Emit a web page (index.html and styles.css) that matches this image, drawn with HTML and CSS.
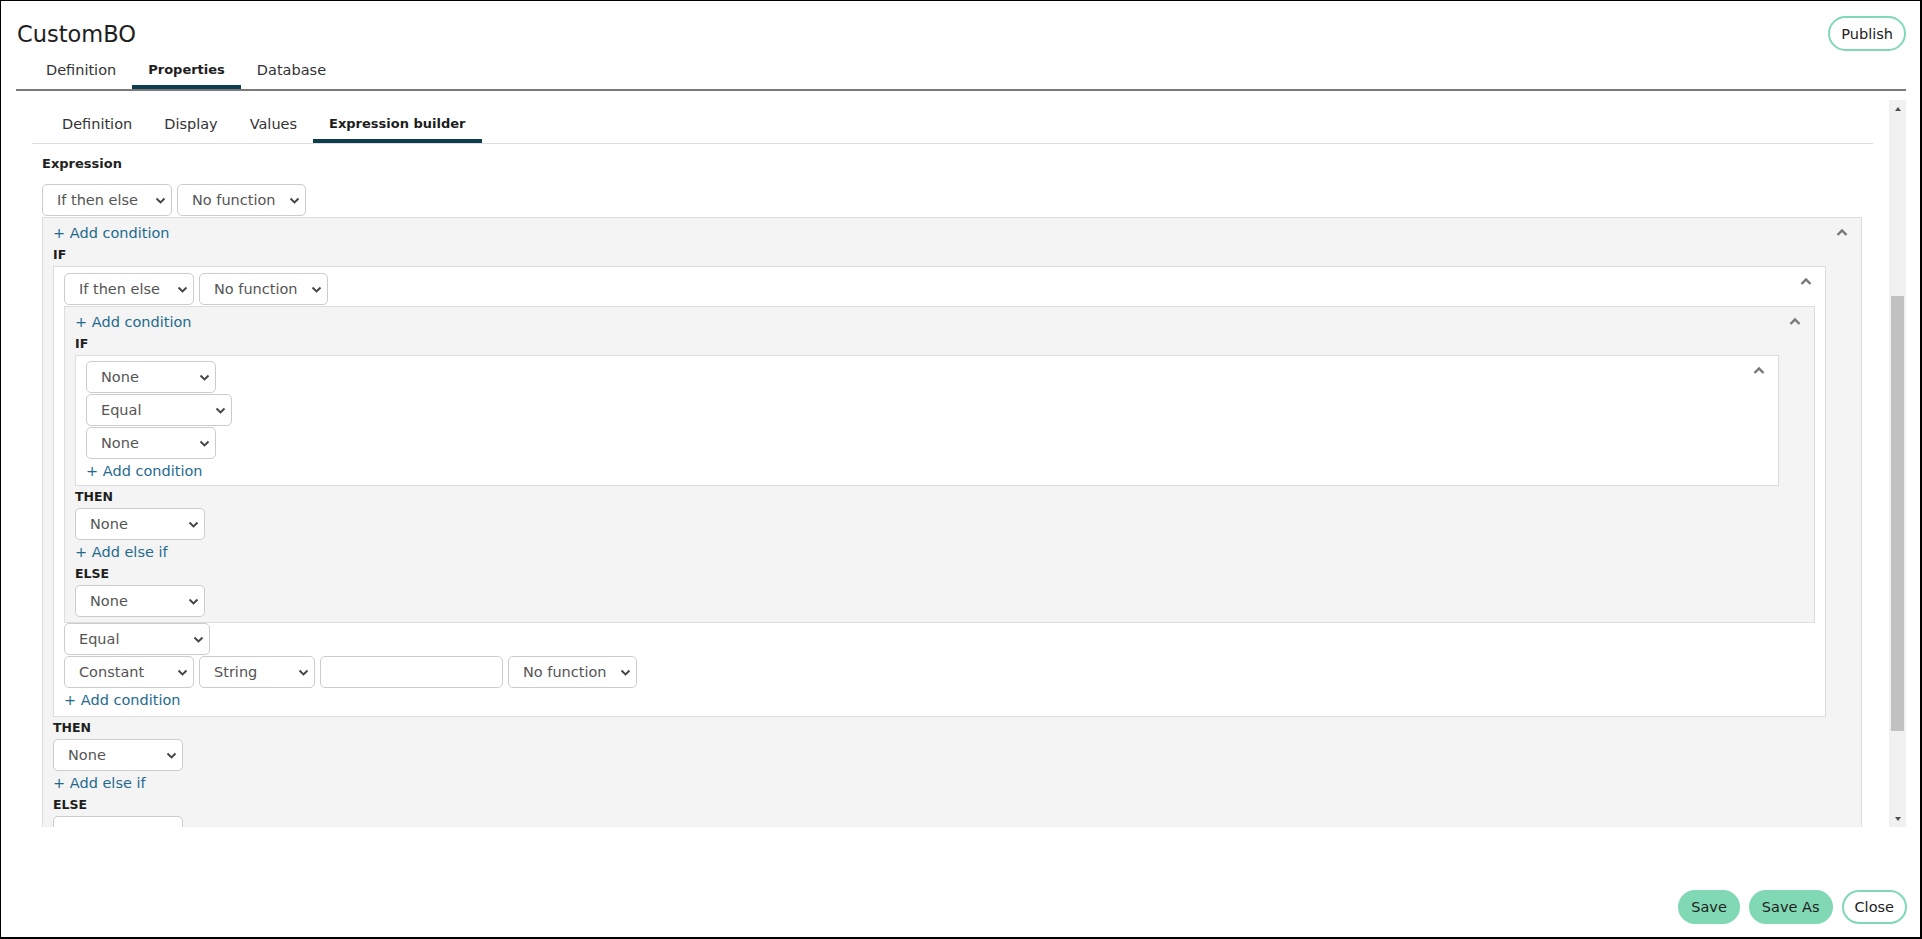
FILE: index.html
```html
<!DOCTYPE html>
<html>
  <head>
    <meta charset="utf-8">
    <title>CustomBO</title>
    <link rel="stylesheet" href="styles.css">
  </head>
  <body>
    <div class="app">
      <header class="topbar">
        <h1>CustomBO</h1>
        <button type="button" class="pill">Publish</button>
      </header>
      <nav class="tabs main-tabs">
        <span class="tab">Definition</span>
        <span class="tab active">Properties</span>
        <span class="tab">Database</span>
      </nav>

      <div class="panel">
        <div class="panel-body">
          <nav class="tabs sub-tabs">
            <span class="tab">Definition</span>
            <span class="tab">Display</span>
            <span class="tab">Values</span>
            <span class="tab active">Expression builder</span>
          </nav>

          <section class="expr">
            <h3 class="expr-title">Expression</h3>
            <div class="row">
              <select class="sel w130"><option>If then else</option></select>
              <select class="sel w129"><option>No function</option></select>
            </div>

            <!-- root if / then / else -->
            <div class="ite">
              <span class="toggle"><svg width="12" height="8" viewBox="0 0 12 8"><polyline points="1.5,7 6,2.5 10.5,7" fill="none" stroke="#777" stroke-width="2.4"/></svg></span>
              <a class="add" href="#">+ Add condition</a>
              <div class="kw">IF</div>

              <div class="cond">
                <span class="toggle"><svg width="12" height="8" viewBox="0 0 12 8"><polyline points="1.5,7 6,2.5 10.5,7" fill="none" stroke="#777" stroke-width="2.4"/></svg></span>
                <div class="row">
                  <select class="sel w130"><option>If then else</option></select>
                  <select class="sel w129"><option>No function</option></select>
                </div>

                <!-- nested if / then / else -->
                <div class="ite inner">
                  <span class="toggle"><svg width="12" height="8" viewBox="0 0 12 8"><polyline points="1.5,7 6,2.5 10.5,7" fill="none" stroke="#777" stroke-width="2.4"/></svg></span>
                  <a class="add" href="#">+ Add condition</a>
                  <div class="kw">IF</div>
                  <div class="cond leaf">
                    <span class="toggle"><svg width="12" height="8" viewBox="0 0 12 8"><polyline points="1.5,7 6,2.5 10.5,7" fill="none" stroke="#777" stroke-width="2.4"/></svg></span>
                    <select class="sel w130"><option>None</option></select>
                    <select class="sel w146"><option>Equal</option></select>
                    <select class="sel w130"><option>None</option></select>
                    <a class="add" href="#">+ Add condition</a>
                  </div>
                  <div class="kw">THEN</div>
                  <select class="sel w130"><option>None</option></select>
                  <a class="add" href="#">+ Add else if</a>
                  <div class="kw">ELSE</div>
                  <select class="sel w130"><option>None</option></select>
                </div>

                <select class="sel w146"><option>Equal</option></select>
                <div class="row">
                  <select class="sel w130"><option>Constant</option></select>
                  <select class="sel w116"><option>String</option></select>
                  <input class="field" type="text">
                  <select class="sel w129"><option>No function</option></select>
                </div>
                <a class="add" href="#">+ Add condition</a>
              </div>

              <div class="kw">THEN</div>
              <select class="sel w130"><option>None</option></select>
              <a class="add" href="#">+ Add else if</a>
              <div class="kw">ELSE</div>
              <select class="sel w130"><option>None</option></select>
            </div>
          </section>
        </div>

        <div class="scrollbar">
          <span class="sb-btn up"></span>
          <div class="sb-track"><div class="sb-thumb"></div></div>
          <span class="sb-btn down"></span>
        </div>
      </div>

      <footer class="actions">
        <button type="button" class="pill solid">Save</button>
        <button type="button" class="pill solid">Save As</button>
        <button type="button" class="pill">Close</button>
      </footer>
    </div>
  </body>
</html>
```

FILE: styles.css
```css
* {
  box-sizing: border-box;
}
html, body {
  margin: 0;
  padding: 0;
}
body {
  font-family: "DejaVu Sans", sans-serif;
  font-size: 14.5px;
  color: #222;
  background: #fff;
}
.app {
  height: 939px;
  border-style: solid;
  border-color: #000;
  border-width: 1px 2px 2px 1px;
  padding: 15px 14px 0 15px;
  display: flex;
  flex-direction: column;
}

/* header */
.topbar {
  display: flex;
  align-items: center;
  justify-content: space-between;
  height: 35px;
  padding-left: 1px;
}
.topbar h1 {
  margin: 0;
  font-size: 22.5px;
  font-weight: normal;
  color: #1e1e1e;
}
.pill {
  height: 35px;
  padding: 0 11px;
  border: 2px solid #81d8b4;
  border-radius: 18px;
  background: #fff;
  font-family: inherit;
  font-size: 14.5px;
  color: #222;
}
.pill.solid {
  background: #81d8b4;
}

/* tabs */
.tabs {
  display: flex;
  padding-left: 14px;
}
.tab {
  padding: 8px 16px 4px;
  line-height: 22px;
  border-bottom: 4px solid transparent;
  color: #333;
  white-space: nowrap;
}
.tab.active {
  border-bottom-color: #0e3d4f;
  font-weight: bold;
  font-size: 13px;
  color: #1e1e1e;
}
.main-tabs {
  border-bottom: 2px solid #7a7a7a;
}
.sub-tabs {
  padding-top: 5px;
  border-bottom: 1px solid #ddd;
}

/* scrolling panel */
.panel {
  margin-top: 9px;
  height: 727px;
  display: flex;
}
.panel-body {
  flex: 1;
  min-width: 0;
  overflow: hidden;
  padding: 0 16px;
}
.scrollbar {
  width: 17px;
  background: #f1f1f1;
  display: flex;
  flex-direction: column;
}
.sb-btn {
  height: 17px;
  display: flex;
  align-items: center;
  justify-content: center;
}
.sb-btn::before {
  content: "";
  border-left: 3.5px solid transparent;
  border-right: 3.5px solid transparent;
}
.sb-btn.up::before {
  border-bottom: 4px solid #505050;
}
.sb-btn.down::before {
  border-top: 4px solid #505050;
}
.sb-track {
  flex: 1;
}
.sb-thumb {
  margin: 179px 2px 0;
  height: 435px;
  background: #c1c1c1;
}

/* expression builder */
.expr {
  padding: 0 11px 0 10px;
}
.expr-title {
  margin: 10px 0;
  font-size: 13px;
  line-height: 20px;
  font-weight: bold;
}
.row {
  display: flex;
  gap: 5px;
}
.sel, .field {
  display: block;
  height: 32px;
  margin: 0 0 1px;
  border: 1px solid #ccc;
  border-radius: 5px;
  background-color: #fff;
  font-family: inherit;
  font-size: 14.5px;
  color: #555;
}
.sel {
  appearance: none;
  padding: 0 20px 0 14px;
  background-image: url("data:image/svg+xml,%3Csvg xmlns='http://www.w3.org/2000/svg' width='11' height='7' viewBox='0 0 11 7'%3E%3Cpath d='M1.5 1.5l4 4 4-4' fill='none' stroke='%23444' stroke-width='1.9'/%3E%3C/svg%3E");
  background-repeat: no-repeat;
  background-position: right 5px center;
}
.field {
  width: 183px;
  padding: 0 8px;
}
.w116 { width: 116px; }
.w129 { width: 129px; }
.w130 { width: 130px; }
.w146 { width: 146px; }

.ite {
  position: relative;
  background: #f4f4f4;
  border: 1px solid #ddd;
  padding: 4px 10px 6px;
}
.ite.inner {
  padding-bottom: 4px;
}
.cond {
  position: relative;
  background: #fff;
  border: 1px solid #ddd;
  margin-right: 25px;
  padding: 6px 10px 5px;
}
.cond.leaf {
  padding: 5px 10px 3px;
}
.toggle {
  position: absolute;
  top: 10px;
  right: 13px;
  width: 12px;
  height: 8px;
  line-height: 0;
}
.add {
  display: block;
  width: max-content;
  line-height: 22px;
  color: #1f6b8e;
  text-decoration: none;
}
.kw {
  font-size: 12.5px;
  font-weight: bold;
  line-height: 22px;
  color: #1e1e1e;
}

/* footer */
.actions {
  display: flex;
  justify-content: flex-end;
  gap: 9px;
  margin: 63px -1px 0 0;
}
.actions .pill {
  height: 34px;
  border-radius: 17px;
}
```
